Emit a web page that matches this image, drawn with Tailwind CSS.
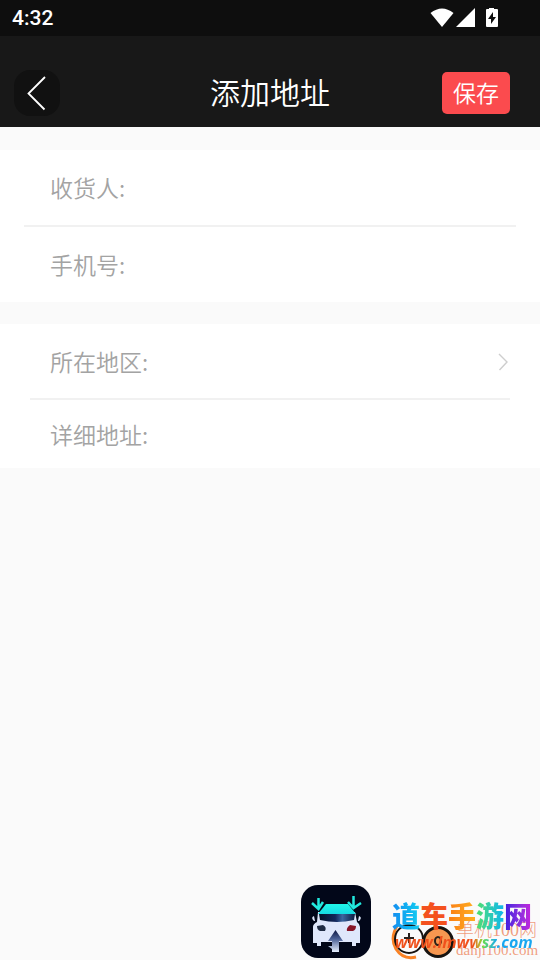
<!DOCTYPE html>
<html lang="zh-CN">
<head>
<meta charset="utf-8">
<meta name="viewport" content="width=device-width, initial-scale=1">
<title>添加地址</title>
<script src="https://cdn.jsdelivr.net/npm/@tailwindcss/browser@4"></script>
</head>
<body class="relative flex min-h-screen flex-col bg-[#fafafa] font-['Noto_Sans_CJK_SC',sans-serif]">
  <div class="flex h-9 items-center justify-between bg-[#0e0e0e] pr-10 pl-3 text-white">
    <span class="pt-0.5 font-[Roboto,sans-serif] text-[21px] font-medium">4:32</span>
    <div class="flex items-center gap-0.5">
      <svg class="h-5 w-6" viewBox="0 0 24 20" fill="currentColor" aria-hidden="true"><path d="M0.500 5Q12 -4 23.500 5L12 19Z"/></svg>
      <svg class="h-5 w-5" viewBox="0 0 20 20" fill="currentColor" aria-hidden="true"><path d="M19 0V19H0Z"/></svg>
      <svg class="ml-1.5 h-5 w-4" viewBox="0 0 16 20" aria-hidden="true"><path fill="currentColor" d="M5 -1h5v2h3q1 0 1 1v16q0 1-1 1H3q-1 0-1-1V2q0-1 1-1h2z"/><path fill="#0e0e0e" d="M9 4v5h3l-5 7v-5H4z"/></svg>
    </div>
  </div>

  <header class="grid h-[91px] grid-cols-[1fr_auto_1fr] items-center bg-[#181818] px-[14px] pt-[22px] text-white">
    <button type="button" aria-label="返回" class="flex size-[46px] items-center justify-center rounded-2xl bg-[#111111]">
      <svg class="h-9 w-5" viewBox="0 0 20 36" fill="none" stroke="currentColor" stroke-width="1.8" aria-hidden="true"><path d="M18 2L1.500 18.500L17.500 34.500"/></svg>
    </button>
    <h1 class="pb-1 text-3xl font-[350]">添加地址</h1>
    <button type="submit" form="address" class="mr-4 flex h-[42px] w-[68px] items-center justify-center justify-self-end rounded-[5px] bg-[#fb4b4e] text-[23px] font-[350]">保存</button>
  </header>

  <form id="address" class="mt-[23px] flex flex-col text-[23px] font-[350] text-[#a3a3a3]">
    <section class="bg-white">
      <div class="flex h-[75px] items-center gap-3 px-[50px]">
        <label for="name" class="shrink-0">收货人:</label>
        <input id="name" type="text" class="h-full min-w-0 flex-1 outline-none">
      </div>
      <hr class="mx-6 border-t-2 border-[#f1f1f1]">
      <div class="flex h-[75px] items-center gap-3 px-[50px]">
        <label for="phone" class="shrink-0">手机号:</label>
        <input id="phone" type="tel" class="h-full min-w-0 flex-1 outline-none">
      </div>
    </section>
    <section class="mt-[22px] bg-white">
      <button type="button" class="flex h-[74px] w-full items-center justify-between pr-8 pl-[50px]">
        <span>所在地区:</span>
        <svg class="h-5 w-[10px]" viewBox="0 0 10 20" fill="none" stroke="#cecece" stroke-width="1.400" aria-hidden="true"><path d="M1 3L9 11L1.500 19"/></svg>
      </button>
      <hr class="mx-[30px] border-t-2 border-[#f1f1f1]">
      <div class="flex h-[68px] items-center gap-3 px-[50px]">
        <label for="detail" class="shrink-0">详细地址:</label>
        <input id="detail" type="text" class="h-full min-w-0 flex-1 outline-none">
      </div>
    </section>
  </form>

  <footer class="mt-auto flex items-end justify-end">
    <svg class="mr-5 mb-0.5 h-[74px] w-[71px]" viewBox="0 0 71 74" aria-hidden="true">
      <defs>
        <linearGradient id="roof" x1="0" y1="0" x2="0" y2="1"><stop offset="0" stop-color="#20f7e8"/><stop offset="1" stop-color="#17d9e4"/></linearGradient>
        <linearGradient id="glass" x1="0" y1="0" x2="1" y2="0"><stop offset="0" stop-color="#031027"/><stop offset=".45" stop-color="#12265a"/><stop offset=".65" stop-color="#3c659f"/><stop offset="1" stop-color="#0b1b40"/></linearGradient>
        <linearGradient id="shaft" x1="0" y1="0" x2="0" y2="1"><stop offset="0" stop-color="#0d1640"/><stop offset=".4" stop-color="#4a5f94"/><stop offset="1" stop-color="#e7f0ff"/></linearGradient>
      </defs>
      <rect x="1" y="1" width="70" height="73" rx="17" fill="#020719"/>
      <path fill="#dfe7fb" d="M18 28H55L57 38Q60 40 60 43V59H56V62H52V58H21V62H17V59H13V43Q13 40 17 38Z"/>
      <path fill="url(#roof)" d="M18 30L26 20H48L56 30Z"/>
      <path fill="url(#glass)" d="M19 30H55L54 36Q37 40 20 36Z"/>
      <path fill="#202c44" d="M17 42L23 41Q27 43 25 47H20Q17 46 17 42Z"/>
      <path fill="#871528" d="M56 42L50 41Q46 44 47 47H53Q56 46 56 42Z"/>
      <path fill="#dfe7fb" d="M14 32Q11 33 13 36L14 37H15ZM59 32Q62 33 60 36L59 37H58Z"/>
      <path fill="url(#shaft)" d="M35.500 46L43 57H39V68H32V65L28 62H32V57H28Z"/>
      <path fill="none" stroke="#22e9df" stroke-width="2.500" d="M18.500 14V25M12 19L18.500 25L23 18M53.500 12V24M48 18L53.500 24L61 19"/>
    </svg>
    <div class="relative h-[61px] w-[149px]">
      <svg class="absolute bottom-0 left-0 h-10 w-[64px]" viewBox="0 0 64 40" fill="none" aria-hidden="true">
        <path d="M8 3Q-2 17 5 29Q12 40 25 37" stroke="#f98225" stroke-width="3"/>
        <circle cx="18" cy="19" r="14" stroke="#171310" stroke-width="2"/>
        <path d="M13 18H23M18 13V23" stroke="#29201c" stroke-width="2"/>
        <circle cx="47" cy="22" r="14.500" fill="#f79750" stroke="#171310" stroke-width="3"/>
        <ellipse cx="47" cy="21" rx="3" ry="4" stroke="#2b211a" stroke-width="2"/>
      </svg>
      <div class="absolute right-0 bottom-0 w-[84px] font-['Liberation_Serif','Noto_Sans_CJK_SC',serif] font-light whitespace-nowrap text-[#eb7548]/70">
        <p class="text-[18px] leading-5">单机100网</p>
        <p class="text-[15px] leading-5">danji100.com</p>
      </div>
      <p class="absolute top-0 left-px text-[28px] leading-8 font-black whitespace-nowrap"><span class="bg-linear-to-r from-[#168cf0] to-[#16cdf0] bg-clip-text text-transparent">道</span><span class="text-[#f4511e]">车</span><span class="bg-linear-to-r from-[#f97d16] to-[#ffb020] bg-clip-text text-transparent">手</span><span class="bg-linear-to-r from-[#52df60] to-[#10b4ee] bg-clip-text text-transparent">游</span><span class="bg-linear-to-r from-[#3b18e0] to-[#c81fdc] bg-clip-text text-transparent">网</span></p>
      <p class="absolute bottom-1.5 left-1 bg-linear-to-r from-[#f0501c] from-55% via-[#67d93d] via-62% to-[#18a6f0] to-72% bg-clip-text pr-1 font-['Open_Sans',sans-serif] text-base leading-6 font-bold whitespace-nowrap text-transparent italic">www.lmwwsz.com</p>
    </div>
  </footer>
</body>
</html>
